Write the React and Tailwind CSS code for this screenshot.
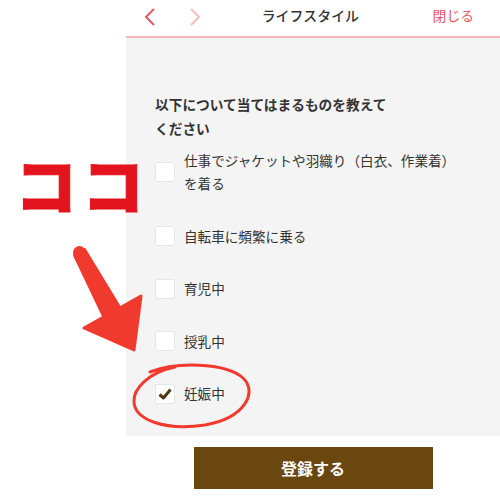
export default function App() {
  const items = [
    "仕事でジャケットや羽織り（白衣、作業着）を着る",
    "自転車に頻繁に乗る",
    "育児中",
    "授乳中",
    "妊娠中",
  ];
  return (
    <div className="relative w-[500px] h-[500px] bg-white overflow-hidden font-['Noto_Sans_CJK_JP','Noto_Sans',sans-serif] text-[#333]">
      <div className="flex h-full">
        <div className="w-[126px] shrink-0" />
        <div className="flex-1 flex flex-col">
          {/* header */}
          <div className="h-[38px] border-b-2 border-[#f5b3b5] flex items-center px-[17px]">
            <svg width="16" height="20" viewBox="0 0 16 20" className="mt-[-2px] ml-[-1px]">
              <path d="M12 2 L4 10 L12 18" fill="none" stroke="#e25a61" strokeWidth="2" />
            </svg>
            <svg width="16" height="20" viewBox="0 0 16 20" className="ml-[30px] mt-[-2px]">
              <path d="M3 2 L11 10 L3 18" fill="none" stroke="#f5bcbf" strokeWidth="2" />
            </svg>
            <div className="flex-1 text-center text-[13.9px] font-medium leading-none mt-[-4px] pr-[16px]">ライフスタイル</div>
            <div className="text-[13.8px] leading-none text-[#e8555c] mt-[-4px] mr-[9px]">閉じる</div>
          </div>
          {/* panel */}
          <div className="bg-[#f4f4f4] pt-[54px] pb-[31px] pl-[29px] pr-[20px]">
            <div className="text-[13.7px] font-bold leading-[24px] w-[240px]">
              以下について当てはまるものを教えてください
            </div>
            <div className="mt-[9px] flex flex-col gap-[29.5px]">
              {items.map((t, i) => (
                <div key={i} className="flex items-center">
                  <div className="w-[20px] h-[20px] shrink-0 bg-white border border-[#e6e6e6] rounded-[2px] flex items-center justify-center">
                    {i === 4 && (
                      <svg width="16" height="16" viewBox="0 0 16 16">
                        <path d="M2.5 8.5 L6.5 12 L13.5 3.5" fill="none" stroke="#4d3812" strokeWidth="3" strokeLinejoin="round" />
                      </svg>
                    )}
                  </div>
                  <div className="ml-[9px] text-[13.6px] leading-[23px] w-[280px]">{t}</div>
                </div>
              ))}
            </div>
          </div>
          <div className="flex justify-center pt-[11px]">
            <button className="w-[239px] h-[42px] bg-[#6b4710] text-white font-bold text-[16px] leading-none">
              登録する
            </button>
          </div>
        </div>
      </div>

      {/* annotations */}
      <div className="absolute left-[15px] top-[152px] text-[62px] font-black leading-none tracking-[5px] text-[#e3141d] [-webkit-text-stroke:1px_#e3141d]">
        ココ
      </div>
      <svg className="absolute left-0 top-0" width="500" height="500" viewBox="0 0 500 500">
        <g fill="#f03a2e" stroke="#f03a2e" strokeWidth="3" strokeLinejoin="round">
          <polygon points="84.5,249.6 74.6,255.4 104,317 120,308" />
          <polygon points="84,328 141,296 134,350" />
          <circle cx="79.5" cy="252.5" r="5" />
        </g>
        <path
          d="M150 372 C 175 362, 225 362, 243 378 C 258 392, 245 418, 205 425 C 165 431, 135 420, 134 402 C 133 388, 150 372, 175 367"
          fill="none"
          stroke="#f03a2e"
          strokeWidth="3"
          strokeLinecap="round"
        />
      </svg>
    </div>
  );
}
